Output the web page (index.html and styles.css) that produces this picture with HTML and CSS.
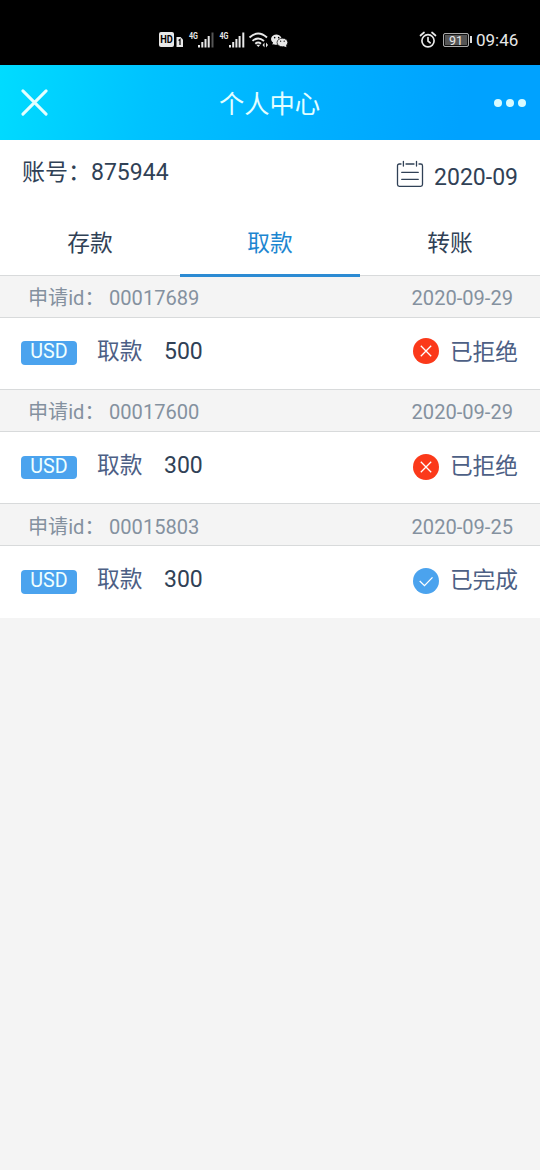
FILE: index.html
```html
<!DOCTYPE html>
<html lang="zh-CN">
<head>
<meta charset="utf-8">
<meta name="viewport" content="width=device-width, initial-scale=1">
<title>个人中心</title>
<link rel="stylesheet" href="styles.css">
</head>
<body>
<div class="status-bar">
  <svg class="status-icons" viewBox="0 0 130 18" fill="#e8e8e8">
    <rect x="0" y="1" width="15" height="15" rx="2"/>
    <text x="1.2" y="12.200" font-size="10" font-weight="700" fill="#000" textLength="12.6" lengthAdjust="spacingAndGlyphs">HD</text>
    <path d="M17.500 6h4l2.500 2.500V16h-6.500z"/>
    <path d="M19.600 9.500l1.400-1V14" fill="none" stroke="#000" stroke-width="1.200"/>
    <text x="30" y="8" font-size="9" font-weight="700" textLength="9" lengthAdjust="spacingAndGlyphs">4G</text>
    <path d="M39 14h2v2.500h-2zM42.300 11h2v5.500h-2zM45.500 8h2v8.500h-2zM48.700 5h2v11.500h-2z"/>
    <path d="M52.500 1.500h2v15h-2z" fill="#555"/>
    <text x="60.500" y="8" font-size="9" font-weight="700" textLength="9" lengthAdjust="spacingAndGlyphs">4G</text>
    <path d="M70 14h2v2.500h-2zM73.200 11h2v5.500h-2zM76.400 8h2v8.500h-2zM79.600 5h2v11.500h-2zM83.300 1.500h2v15h-2z"/>
    <g fill="none" stroke="#e8e8e8" stroke-width="1.900">
      <path d="M90.500 6.500q8.500-8 17.500 0M93.500 9.900q5.500-5 11.500 0M96.300 12.700q2.800-2.400 5.700 0"/>
    </g>
    <path d="M97.300 13.800h4L99.300 16zM105.500 11.500v5l-2-2.500zM107 11.500l2 2.500-2 2.500z"/>
    <g transform="translate(13.500 1.500) scale(.89)">
      <path d="M113 11.300c-1 3-1.200 2.400.8 1.800 1.400.7 3 .8 4.500.5 7-1 5.500-11-1.300-11.300-6.500.2-8 6.500-4 9z"/>
      <ellipse cx="123.500" cy="11.200" rx="6" ry="4.800" stroke="#000" stroke-width=".8"/>
      <path d="M124 15l4 1.700-.5-3z"/>
      <g fill="#000"><circle cx="114.800" cy="5.800" r=".9"/><circle cx="119.300" cy="5.800" r=".9"/><circle cx="121.500" cy="9.800" r=".7"/><circle cx="125.500" cy="9.800" r=".7"/></g>
    </g>
  </svg>
  <svg class="alarm" viewBox="0 0 18 18" fill="none" stroke="#e8e8e8" stroke-width="1.700" stroke-linecap="round">
    <circle cx="9" cy="9.800" r="6.100"/><path d="M9 6.500v3.500l2.200 1.800M1.500 4.500L5 1.500M16.500 4.500L13 1.500"/>
  </svg>
  <span class="battery">91</span><span class="battery-tip"></span>
  <span class="clock">09:46</span>
</div>
<header class="nav">
  <svg class="close" viewBox="0 0 28 28" fill="none" stroke="#e4ffff" stroke-width="3.100" stroke-linecap="round"><path d="M2 2l24 24M26 2l-24 24"/></svg>
  <h1 class="title">个人中心</h1>
  <svg class="more" viewBox="0 0 32 8" fill="#d9fbff"><circle cx="4" cy="4" r="4"/><circle cx="16" cy="4" r="4"/><circle cx="28" cy="4" r="4"/></svg>
</header>
<section class="account">
  <span class="account-id">账号：875944</span>
  <svg class="calendar" viewBox="0 0 28 28" fill="none" stroke="#304156" stroke-width="1.300" stroke-linecap="round">
    <path d="M5 4H3.300Q1.500 4 1.500 5.800V24.500Q1.500 26.300 3.300 26.300H24.700Q26.500 26.300 26.500 24.500V5.800Q26.500 4 24.700 4H23M10 4h8M7.400 1.300v4.700M20.500 1.300v4.700M5.700 12.300h16.600M5.700 19.300h16.600"/>
  </svg>
  <span class="month">2020-09</span>
</section>
<nav class="tabs">
  <span class="tab">存款</span>
  <span class="tab active">取款</span>
  <span class="tab">转账</span>
</nav>
<main>
  <article class="record">
    <div class="record-head"><span class="label">申请id：</span><span>00017689</span><span class="date">2020-09-29</span></div>
    <div class="record-body">
      <span class="currency">USD</span><span class="kind">取款</span><span class="amount">500</span>
      <svg class="state-icon" viewBox="0 0 26 26" fill="none" stroke="#fff" stroke-width="1.300"><circle cx="13" cy="13" r="13" fill="#fb391a" stroke="none"/><path d="M7.800 7.800l10.400 10.400M18.200 7.800L7.800 18.200"/></svg>
      <span class="state">已拒绝</span>
    </div>
  </article>
  <article class="record second">
    <div class="record-head"><span class="label">申请id：</span><span>00017600</span><span class="date">2020-09-29</span></div>
    <div class="record-body">
      <span class="currency">USD</span><span class="kind">取款</span><span class="amount">300</span>
      <svg class="state-icon" viewBox="0 0 26 26" fill="none" stroke="#fff" stroke-width="1.300"><circle cx="13" cy="13" r="13" fill="#fb391a" stroke="none"/><path d="M7.800 7.800l10.400 10.400M18.200 7.800L7.800 18.200"/></svg>
      <span class="state">已拒绝</span>
    </div>
  </article>
  <article class="record last">
    <div class="record-head"><span class="label">申请id：</span><span>00015803</span><span class="date">2020-09-25</span></div>
    <div class="record-body">
      <span class="currency">USD</span><span class="kind">取款</span><span class="amount">300</span>
      <svg class="state-icon" viewBox="0 0 26 26" fill="none" stroke="#fff" stroke-width="1.300"><circle cx="13" cy="13" r="13" fill="#4ba3ee" stroke="none"/><path d="M6.700 13l4.800 4.600 8-8.200"/></svg>
      <span class="state">已完成</span>
    </div>
  </article>
</main>
</body>
</html>
```
FILE: styles.css
```css
* { box-sizing: border-box; }
body {
  margin: 0;
  min-height: 1170px;
  background: #f4f4f4;
  color: #304156;
  font: 400 22.700px/24px Roboto, "Noto Sans CJK SC", sans-serif;
}
svg { display: block; flex: none; }
span { white-space: nowrap; }
.status-bar {
  display: flex;
  align-items: center;
  height: 65px;
  padding: 14px 22px 0 159px;
  background: #000;
  color: #e8e8e8;
}
.status-icons { width: 130px; height: 18px; margin-right: auto; font-family: Roboto, sans-serif; }
.alarm { width: 18px; height: 18px; margin-right: 6px; }
.battery {
  width: 26px;
  height: 14px;
  border: 1px solid #aaa;
  border-radius: 2px;
  background: #555;
  box-shadow: inset 0 0 0 1px #111;
  font-size: 12.500px;
  line-height: 13px;
  text-align: center;
}
.battery-tip { width: 2px; height: 7px; margin: 0 4px 0 1px; background: #ddd; }
.clock { width: 42px; font-size: 17px; }
.nav {
  display: flex;
  align-items: center;
  justify-content: space-between;
  height: 75px;
  padding: 0 14px 0 21px;
  background: linear-gradient(100deg, #00dcff 0%, #00c2ff 28%, #00b0ff 58%, #00a2ff 85%);
}
.close { width: 27px; height: 27px; }
.title { margin: 4px 3px 0 0; color: #e4ffff; font-size: 25.300px; font-weight: 400; }
.more { width: 32px; height: 8px; }
.account {
  display: flex;
  align-items: flex-start;
  height: 70px;
  padding: 21px 22px 0;
  background: #fff;
}
.account-id { font-size: 23px; }
.calendar { width: 28px; height: 28px; margin: -1px 10px 0 auto; }
.month { margin-top: 5px; font-size: 23px; }
.tabs {
  display: grid;
  grid-template-columns: repeat(3, 1fr);
  height: 65px;
  background: #fff;
}
.tab { padding-top: 22px; text-align: center; }
.active {
  z-index: 1;
  height: 67px;
  border-bottom: 3px solid #2c8bd3;
  color: #1c86d1;
}
.record-head {
  display: flex;
  height: 43px;
  padding: 10px 27px 0 28px;
  border-top: 1px solid #d8dadb;
  border-bottom: 1px solid #d8dadb;
  color: #84919f;
  font-size: 20.100px;
  line-height: 24px;
}
.label { width: 81px; }
.date { margin-left: auto; }
.record-body {
  display: flex;
  height: 71px;
  padding: 22px 22px 0 21px;
  background: #fff;
}
.currency {
  width: 56px;
  height: 24px;
  margin: 1px 20px 0 0;
  border-radius: 4px;
  background: #4ba3ee;
  color: #f0ffff;
  font-size: 19.700px;
  line-height: 21px;
  text-align: center;
}
.kind { width: 67px; color: #4d6085; }
.amount { font-size: 23px; }
.state-icon { width: 26px; height: 26px; margin: -2px 11px 0 auto; }
.state { margin-top: 1px; color: #4d6085; }
.second .currency { height: 23px; margin-top: 2px; }
.second .state-icon { margin-top: 0; }
.last .record-head { padding-top: 11px; }
.last .record-body { height: 72px; }
.last .currency { margin-top: 2px; }
.last .state-icon { margin-top: 0; }
```
